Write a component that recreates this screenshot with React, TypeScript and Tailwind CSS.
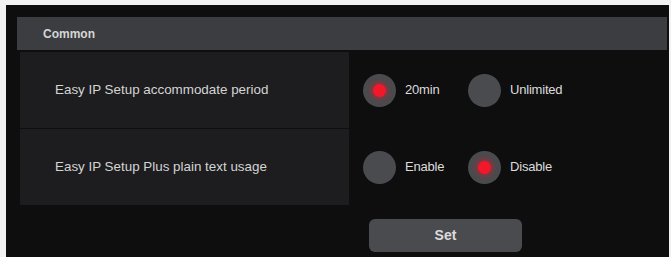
import React from "react";

function Radio({ label, checked, width }: { label: string; checked: boolean; width?: string }) {
  return (
    <div className={`flex items-center ${width ?? ""}`}>
      <div className="w-[33px] h-[33px] rounded-full bg-[#4a4b4e] flex items-center justify-center shrink-0">
        {checked && (
          <div className="w-[13px] h-[13px] rounded-full bg-[#f2182a] shadow-[0_0_5px_2px_rgba(230,20,40,0.55)]" />
        )}
      </div>
      <span className="ml-[9px] text-[13px] text-[#dcdcdc] tracking-[-0.2px]">{label}</span>
    </div>
  );
}

export default function App() {
  return (
    <div
      className="w-[671px] h-[257px] bg-[#f2f2f2] pt-[5px] pl-[6px] pr-[2px] overflow-hidden"
      style={{ fontFamily: '"Liberation Sans", Arial, sans-serif' }}
    >
      <div className="h-full bg-[#0e0e0f] pt-[12px] pl-[11px] pr-[2px]">
        <div className="h-[33px] bg-[#3c3d40] flex items-center pl-[26px] text-[12px] font-bold text-[#d6d6d6]">
          Common
        </div>
        <div className="mt-[2px] flex flex-col gap-[1px]">
          <div className="flex h-[76px]">
            <div className="ml-[3px] w-[329px] bg-[#1d1d1f] flex items-center pl-[35px] text-[13.4px] text-[#d4d4d4]">
              Easy IP Setup accommodate period
            </div>
            <div className="flex items-center pl-[14px]">
              <Radio label="20min" checked width="w-[105px]" />
              <Radio label="Unlimited" checked={false} />
            </div>
          </div>
          <div className="flex h-[76px]">
            <div className="ml-[3px] w-[329px] bg-[#1d1d1f] flex items-center pl-[35px] text-[13.4px] text-[#d4d4d4]">
              Easy IP Setup Plus plain text usage
            </div>
            <div className="flex items-center pl-[14px]">
              <Radio label="Enable" checked={false} width="w-[105px]" />
              <Radio label="Disable" checked />
            </div>
          </div>
        </div>
        <button className="mt-[14px] ml-[352px] w-[153px] h-[33px] rounded-[6px] bg-[#4a4b4f] text-[14px] font-bold text-[#dcdcdc] flex items-center justify-center">
          Set
        </button>
      </div>
    </div>
  );
}
